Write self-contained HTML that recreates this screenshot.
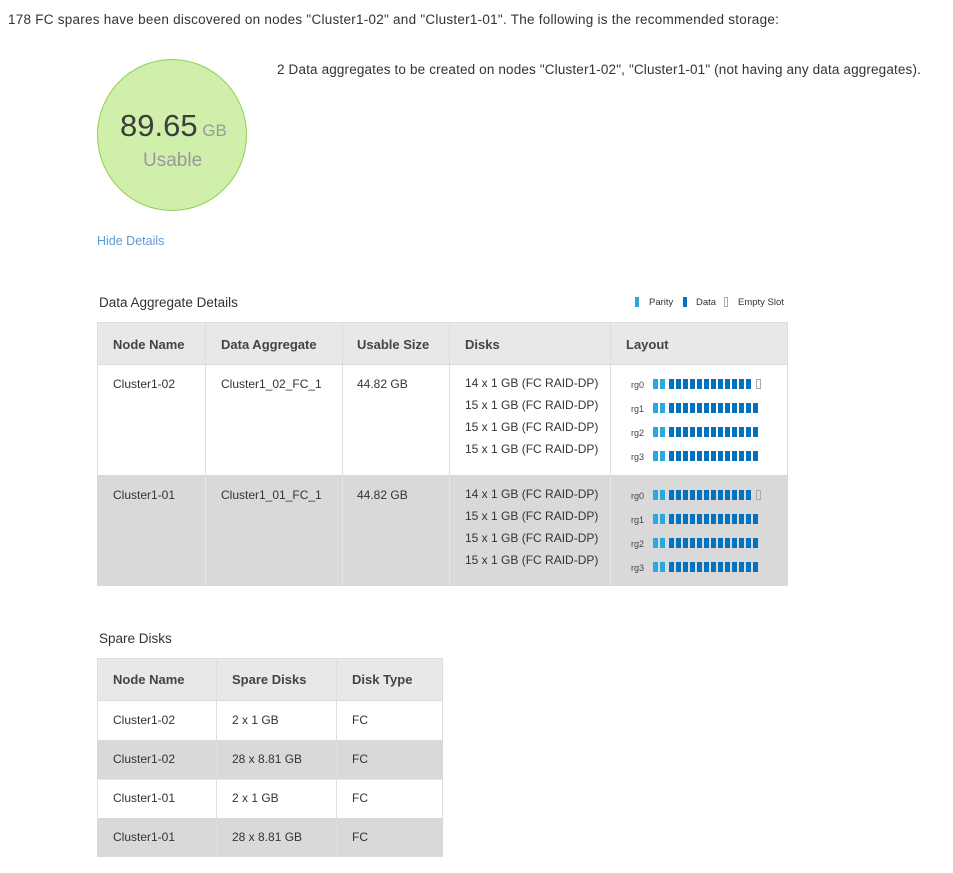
<!DOCTYPE html>
<html><head><meta charset="utf-8"><style>
*{margin:0;padding:0;box-sizing:border-box}
body{width:953px;height:873px;background:#fff;font-family:"Liberation Sans",sans-serif;color:#333;position:relative;overflow:hidden}
.a{position:absolute;white-space:nowrap}
.t{font-size:12px;color:#333}
.h{font-size:13px;font-weight:bold;color:#444}
.b{position:absolute;width:5px;height:10px}
.p{background:#29a8e0}.d{background:#0074c1}
.e{border:1px solid #aaa;background:transparent;width:5px;height:10px;position:absolute}
.l{position:absolute;font-size:9px;color:#444}
</style></head><body>
<div class="a" style="left:8px;top:12px;font-size:13.5px;color:#333;letter-spacing:0.25px">178 FC spares have been discovered on nodes "Cluster1-02" and "Cluster1-01". The following is the recommended storage:</div>
<div class="a" style="left:277px;top:62px;font-size:13.5px;letter-spacing:0.15px">2 Data aggregates to be created on nodes "Cluster1-02", "Cluster1-01" (not having any data aggregates).</div>
<div class="a" style="left:97px;top:59px;width:150px;height:152px;border-radius:50%;background:#d0efab;border:1px solid #8fd14f"></div>
<div class="a" style="left:120px;top:108px;font-size:31px;color:#3d3d3d">89.65<span style="font-size:17px;color:#999"> GB</span></div>
<div class="a" style="left:143px;top:150px;font-size:19px;color:#999">Usable</div>
<div class="a" style="left:97px;top:234px;font-size:12.5px;color:#5b9bd5">Hide Details</div>
<div class="a" style="left:99px;top:295px;font-size:13.5px">Data Aggregate Details</div>
<div class="b p" style="left:635px;top:297px;width:4px"></div><div class="a" style="left:649px;top:297px;font-size:9.5px">Parity</div>
<div class="b d" style="left:683px;top:297px;width:4px"></div><div class="a" style="left:696px;top:297px;font-size:9.5px">Data</div>
<div class="e" style="left:724px;top:297px;width:4px"></div><div class="a" style="left:738px;top:297px;font-size:9.5px">Empty Slot</div>

<div class="a" style="left:97px;top:322px;width:691px;height:264px;border:1px solid #ddd;background:#fff"></div>
<div class="a" style="left:97px;top:322px;width:691px;height:43px;background:#e8e8e8;border:1px solid #ddd"></div>
<div class="a" style="left:97px;top:475px;width:691px;height:111px;background:#d9d9d9"></div>
<div class="a" style="left:205px;top:322px;width:1px;height:153px;background:#ddd"></div>
<div class="a" style="left:342px;top:322px;width:1px;height:153px;background:#ddd"></div>
<div class="a" style="left:449px;top:322px;width:1px;height:153px;background:#ddd"></div>
<div class="a" style="left:610px;top:322px;width:1px;height:153px;background:#ddd"></div>
<div class="a" style="left:205px;top:475px;width:1px;height:111px;background:#e6e6e6"></div>
<div class="a" style="left:342px;top:475px;width:1px;height:111px;background:#e6e6e6"></div>
<div class="a" style="left:449px;top:475px;width:1px;height:111px;background:#e6e6e6"></div>
<div class="a" style="left:610px;top:475px;width:1px;height:111px;background:#e6e6e6"></div>
<div class="a h" style="left:113px;top:337px">Node Name</div>
<div class="a h" style="left:221px;top:337px">Data Aggregate</div>
<div class="a h" style="left:357px;top:337px">Usable Size</div>
<div class="a h" style="left:465px;top:337px">Disks</div>
<div class="a h" style="left:626px;top:337px">Layout</div>
<div class="a t" style="left:113px;top:377px">Cluster1-02</div>
<div class="a t" style="left:221px;top:377px">Cluster1_02_FC_1</div>
<div class="a t" style="left:357px;top:377px">44.82 GB</div>
<div class="a t" style="left:465px;top:372px;line-height:22px">14 x 1 GB (FC RAID-DP)<br>15 x 1 GB (FC RAID-DP)<br>15 x 1 GB (FC RAID-DP)<br>15 x 1 GB (FC RAID-DP)</div>
<div class="a t" style="left:113px;top:488px">Cluster1-01</div>
<div class="a t" style="left:221px;top:488px">Cluster1_01_FC_1</div>
<div class="a t" style="left:357px;top:488px">44.82 GB</div>
<div class="a t" style="left:465px;top:483px;line-height:22px">14 x 1 GB (FC RAID-DP)<br>15 x 1 GB (FC RAID-DP)<br>15 x 1 GB (FC RAID-DP)<br>15 x 1 GB (FC RAID-DP)</div>
<div id="bars"></div>
<script>
var h='';
[379,490].forEach(function(base){
 for(var r=0;r<4;r++){
  var y=base+r*24;
  h+='<div class="l" style="left:631px;top:'+(y+1)+'px">rg'+r+'</div>';
  h+='<div class="b p" style="left:653px;top:'+y+'px"></div><div class="b p" style="left:660px;top:'+y+'px"></div>';
  var n=r==0?12:13;
  for(var i=0;i<n;i++)h+='<div class="b d" style="left:'+(669+i*7)+'px;top:'+y+'px"></div>';
  if(r==0)h+='<div class="e" style="left:756px;top:'+y+'px;width:5px"></div>';
 }
});
document.getElementById('bars').innerHTML=h;
</script>

<div class="a" style="left:99px;top:631px;font-size:13.5px">Spare Disks</div>
<div class="a" style="left:97px;top:658px;width:346px;height:199px;border:1px solid #ddd;background:#fff"></div>
<div class="a" style="left:97px;top:658px;width:346px;height:43px;background:#e8e8e8;border:1px solid #ddd"></div>
<div class="a" style="left:97px;top:740px;width:346px;height:39px;background:#d9d9d9"></div>
<div class="a" style="left:97px;top:818px;width:346px;height:39px;background:#d9d9d9"></div>
<div class="a" style="left:216px;top:658px;width:1px;height:199px;background:#ddd"></div>
<div class="a" style="left:336px;top:658px;width:1px;height:199px;background:#ddd"></div>
<div class="a" style="left:97px;top:779px;width:346px;height:1px;background:#e6e6e6"></div>
<div class="a h" style="left:113px;top:672px">Node Name</div>
<div class="a h" style="left:232px;top:672px">Spare Disks</div>
<div class="a h" style="left:352px;top:672px">Disk Type</div>
<div class="a t" style="left:113px;top:713px">Cluster1-02</div><div class="a t" style="left:232px;top:713px">2 x 1 GB</div><div class="a t" style="left:352px;top:713px">FC</div>
<div class="a t" style="left:113px;top:752px">Cluster1-02</div><div class="a t" style="left:232px;top:752px">28 x 8.81 GB</div><div class="a t" style="left:352px;top:752px">FC</div>
<div class="a t" style="left:113px;top:791px">Cluster1-01</div><div class="a t" style="left:232px;top:791px">2 x 1 GB</div><div class="a t" style="left:352px;top:791px">FC</div>
<div class="a t" style="left:113px;top:830px">Cluster1-01</div><div class="a t" style="left:232px;top:830px">28 x 8.81 GB</div><div class="a t" style="left:352px;top:830px">FC</div>
</body></html>
